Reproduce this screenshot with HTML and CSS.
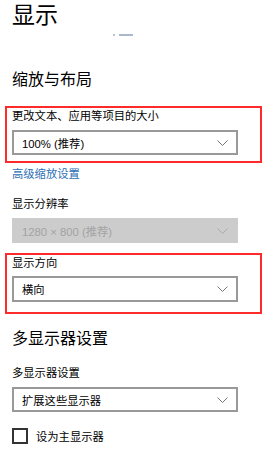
FILE: index.html
```html
<!DOCTYPE html>
<html lang="zh-CN"><head>
    <meta charset="UTF-8">
    <meta name="viewport" content="width=device-width, initial-scale=1.0">
    <title>显示</title>
    <link rel="stylesheet" href="styles.css">
</head>
<body>

    <h1 class="page-title">显示</h1>
    <div class="scroll-mark"><span class="dot"></span><span class="dash"></span></div>

    <h2 class="section-title first">缩放与布局</h2>

    <div class="highlight first-box">
        <p class="label">更改文本、应用等项目的大小</p>
        <div class="select">
            <span>100% (推荐)</span>
            <svg class="chevron" width="11" height="6" viewBox="0 0 11 6"><polyline points="0.5,0.5 5.5,5.5 10.5,0.5" fill="none" stroke="#777" stroke-width="1"/></svg>
        </div>
    </div>

    <a class="link" href="#">高级缩放设置</a>

    <p class="label resolution">显示分辨率</p>
    <div class="select disabled">
        <span>1280 × 800 (推荐)</span>
        <svg class="chevron" width="11" height="6" viewBox="0 0 11 6"><polyline points="0.5,0.5 5.5,5.5 10.5,0.5" fill="none" stroke="#aaa" stroke-width="1"/></svg>
    </div>

    <div class="highlight second-box">
        <p class="label">显示方向</p>
        <div class="select">
            <span>横向</span>
            <svg class="chevron" width="11" height="6" viewBox="0 0 11 6"><polyline points="0.5,0.5 5.5,5.5 10.5,0.5" fill="none" stroke="#777" stroke-width="1"/></svg>
        </div>
    </div>

    <h2 class="section-title multi">多显示器设置</h2>

    <p class="label multi-label">多显示器设置</p>
    <div class="select">
        <span>扩展这些显示器</span>
        <svg class="chevron" width="11" height="6" viewBox="0 0 11 6"><polyline points="0.5,0.5 5.5,5.5 10.5,0.5" fill="none" stroke="#777" stroke-width="1"/></svg>
    </div>

    <label class="check">
        <span class="box"></span>
        <span>设为主显示器</span>
    </label>

</body></html>
```

FILE: styles.css
```css
/* windows 10 settings look */
body {
    margin: 0;
    padding: 0 0 0 12px;
    background-color: #ffffff;
    color: #000000;
    font-family: "Liberation Sans", "Noto Sans CJK SC", sans-serif;
}

p {
    margin: 0;
}

.page-title {
    margin: 0;
    padding-top: 4px;
    font-size: 23px;
    line-height: 23px;
    font-weight: normal;
}

.scroll-mark {
    display: flex;
    align-items: center;
    margin: 7px 0 0 101px;
    height: 2px;
}

.scroll-mark .dot {
    width: 2px;
    height: 2px;
    background-color: #b7c4d3;
}

.scroll-mark .dash {
    width: 14px;
    height: 2px;
    margin-left: 4px;
    background-color: #a9b8ca;
}

.section-title {
    margin: 0;
    font-size: 16px;
    line-height: 16px;
    font-weight: normal;
}

.section-title.first {
    margin-top: 36px;
}

.section-title.multi {
    margin-top: 17px;
}

.label {
    font-size: 11.3px;
    line-height: 14px;
}

.highlight {
    margin-left: -7px;
    width: 248px;
    border: 2px solid #ff2a2a;
    padding: 1px 0 0 5px;
}

.first-box {
    margin-top: 18px;
    padding-bottom: 6px;
}

.second-box {
    margin-top: 10px;
    padding-bottom: 10px;
}

.second-box .select {
    margin-top: 6px;
    height: 26px;
}

.select {
    box-sizing: border-box;
    display: flex;
    align-items: center;
    justify-content: space-between;
    width: 226px;
    height: 25px;
    margin-top: 7px;
    padding: 0 8px;
    border: 2px solid #999999;
    font-size: 11.3px;
    background-color: #ffffff;
}

.select.disabled {
    border-color: #cccccc;
    background-color: #cccccc;
    color: #a3a3a3;
}

.chevron {
    display: block;
}

.link {
    display: block;
    margin-top: 4px;
    font-size: 11.3px;
    line-height: 14px;
    color: #2d6fb6;
    text-decoration: none;
}

.resolution {
    margin-top: 16px;
}

.multi-label {
    margin-top: 19px;
}

.check {
    display: flex;
    align-items: center;
    margin-top: 16px;
    font-size: 11.3px;
}

.check .box {
    box-sizing: border-box;
    width: 16px;
    height: 16px;
    margin-right: 8px;
    border: 2px solid #333333;
}
```
